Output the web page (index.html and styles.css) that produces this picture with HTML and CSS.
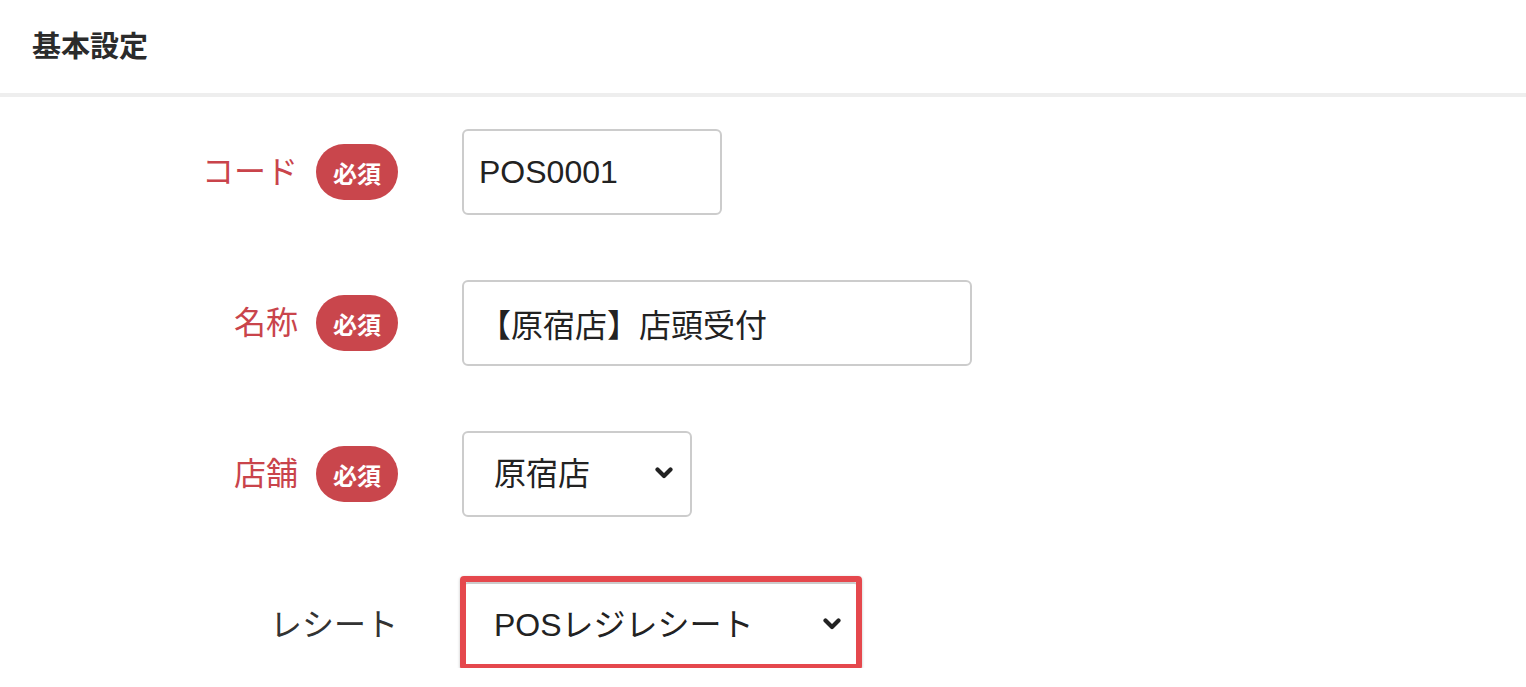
FILE: index.html
```html
<!DOCTYPE html>
<html lang="ja">
<head>
<meta charset="UTF-8">
<meta name="viewport" content="width=device-width, initial-scale=1.0">
<title>基本設定</title>
<link rel="stylesheet" href="styles.css">
</head>
<body>
  <div class="panel-header">
    <h2>基本設定</h2>
  </div>
  <form class="settings-form">
    <div class="form-row">
      <div class="form-label required">
        <label for="code">コード</label>
        <span class="badge">必須</span>
      </div>
      <input type="text" id="code" class="input-code" value="POS0001">
    </div>
    <div class="form-row">
      <div class="form-label required">
        <label for="name">名称</label>
        <span class="badge">必須</span>
      </div>
      <input type="text" id="name" class="input-name" value="【原宿店】店頭受付">
    </div>
    <div class="form-row">
      <div class="form-label required">
        <label for="store">店舗</label>
        <span class="badge">必須</span>
      </div>
      <div class="select-wrap select-store">
        <select id="store">
          <option>原宿店</option>
        </select>
        <svg class="chevron" viewBox="0 0 18 12" width="18" height="12"><path d="M2.5 2.5l6.5 6.5 6.5-6.5" fill="none" stroke="#222" stroke-width="4.2" stroke-linecap="round" stroke-linejoin="round"/></svg>
      </div>
    </div>
    <div class="form-row">
      <div class="form-label">
        <label for="receipt">レシート</label>
      </div>
      <div class="select-wrap select-receipt highlight">
        <select id="receipt">
          <option>POSレジレシート</option>
        </select>
        <svg class="chevron" viewBox="0 0 18 12" width="18" height="12"><path d="M2.5 2.5l6.5 6.5 6.5-6.5" fill="none" stroke="#222" stroke-width="4.2" stroke-linecap="round" stroke-linejoin="round"/></svg>
      </div>
    </div>
  </form>
</body>
</html>
```

FILE: styles.css
```css
body {
  font-family: "Liberation Sans", "Noto Sans CJK JP", sans-serif;
  background-color: #fff;
  color: #333;
  margin: 0;
  padding: 0;
}
.panel-header {
  display: flex;
  align-items: center;
  height: 93px;
  padding-left: 32px;
  border-bottom: 4px solid #eeeeee;
}
.panel-header h2 {
  margin: 0;
  padding-bottom: 6px;
  font-size: 29px;
  font-weight: bold;
  color: #2b2b2b;
}
.settings-form {
  padding-top: 32px;
  display: flex;
  flex-direction: column;
  gap: 65px;
}
.form-row {
  display: flex;
  align-items: center;
  gap: 64px;
  height: 86px;
}
.form-label {
  width: 398px;
  display: flex;
  align-items: center;
  justify-content: flex-end;
  gap: 18px;
  font-size: 32px;
  color: #333;
}
.form-label label {
  padding-bottom: 7px;
}
.form-label.required {
  color: #c9444b;
}
.badge {
  display: inline-flex;
  align-items: center;
  justify-content: center;
  height: 56px;
  padding: 0 17px;
  border-radius: 28px;
  background-color: #c9464c;
  color: #fff;
  font-size: 24px;
  font-weight: bold;
}
input[type="text"], select {
  box-sizing: border-box;
  height: 86px;
  font-family: "Liberation Sans", "Noto Sans CJK JP", sans-serif;
  font-size: 32px;
  color: #222;
  background-color: #fff;
  border: 2px solid #cccccc;
  border-radius: 6px;
  outline: none;
}
input[type="text"] {
  padding: 0 15px;
}
.input-code {
  width: 260px;
}
.input-name {
  width: 510px;
}
.select-wrap {
  position: relative;
  height: 86px;
}
.select-wrap select {
  appearance: none;
  -webkit-appearance: none;
  width: 100%;
  padding: 0 56px 0 30px;
}
.select-store {
  width: 230px;
}
.select-receipt {
  width: 398px;
}
.chevron {
  position: absolute;
  right: 19px;
  top: 36px;
  pointer-events: none;
}
.highlight::after {
  content: "";
  position: absolute;
  left: -2px;
  right: -2px;
  top: -6px;
  bottom: -2px;
  border: 6px solid #e5484d;
  border-radius: 4px;
  box-shadow: 0 1px 3px rgba(0, 0, 0, 0.25);
  pointer-events: none;
}
```
